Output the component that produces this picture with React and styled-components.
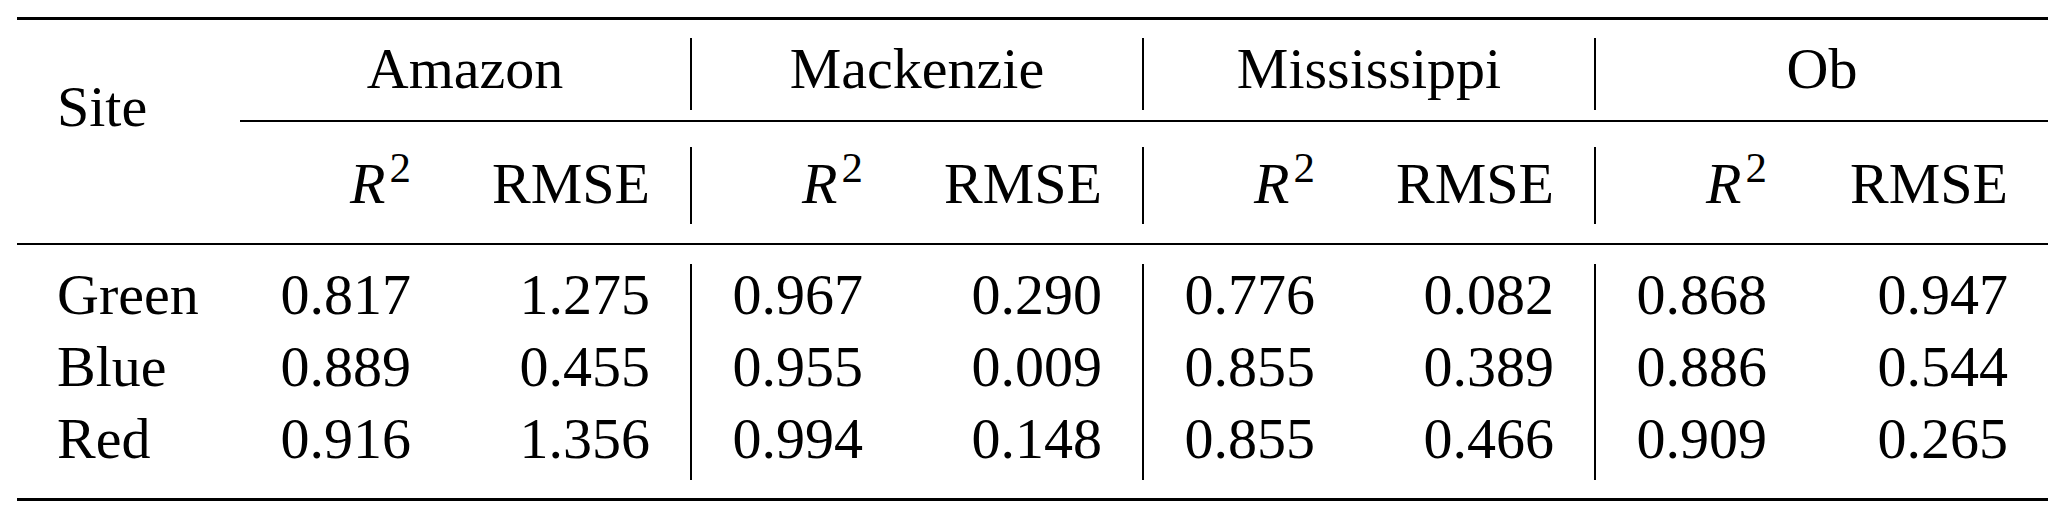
import React from 'react';
import styled, { createGlobalStyle } from 'styled-components';

const Global = createGlobalStyle`
  html, body { margin: 0; padding: 0; background: #fff; }
  body { font-family: "Liberation Serif", "Times New Roman", serif; color: #000; }
`;

const Page = styled.div`
  padding: 17px 0 0 17px;
`;

const Table = styled.div`
  display: grid;
  grid-template-columns: 223px repeat(4, 211px 241px);
  width: max-content;
  font-family: "Liberation Serif", "Times New Roman", serif;
  font-size: 58px;
  color: #000;
`;

const Rule = styled.div`
  grid-column: ${p => p.$from || 1} / -1;
  height: ${p => p.$w}px;
  background: #000;
  margin-top: ${p => p.$mt || 0}px;
  margin-bottom: ${p => p.$mb || 0}px;
`;

const SiteCell = styled.div`
  grid-column: 1;
  grid-row: 2 / span 3;
  padding: 38px 0 0 40px;
  line-height: 61px;
  white-space: nowrap;
`;

const GroupHead = styled.div`
  grid-column: span 2;
  box-sizing: border-box;
  height: 72px;
  line-height: 61px;
  padding-bottom: 11px;
  text-align: center;
  white-space: nowrap;
  border-right: ${p => (p.$sep ? '2px solid #000' : 'none')};
`;

const SubHead = styled.div`
  box-sizing: border-box;
  height: 77px;
  line-height: 61px;
  padding: 6px 40px 10px 0;
  text-align: right;
  white-space: nowrap;
  border-right: ${p => (p.$sep ? '2px solid #000' : 'none')};
`;

const Cell = styled.div`
  box-sizing: border-box;
  height: 72px;
  line-height: 61px;
  padding: 0 ${p => (p.$first ? 0 : 40)}px 11px ${p => (p.$first ? 40 : 0)}px;
  text-align: ${p => (p.$first ? 'left' : 'right')};
  white-space: nowrap;
  border-right: ${p => (p.$sep ? '2px solid #000' : 'none')};
`;

const MathR = styled.span`
  font-style: italic;
`;

const Sup = styled.sup`
  font-size: 0.74em;
  line-height: 0;
  vertical-align: 21px;
  margin-left: 4px;
`;

const groups = ['Amazon', 'Mackenzie', 'Mississippi', 'Ob'];

const rows = [
  ['Green', ['0.817', '1.275'], ['0.967', '0.290'], ['0.776', '0.082'], ['0.868', '0.947']],
  ['Blue', ['0.889', '0.455'], ['0.955', '0.009'], ['0.855', '0.389'], ['0.886', '0.544']],
  ['Red', ['0.916', '1.356'], ['0.994', '0.148'], ['0.855', '0.466'], ['0.909', '0.265']],
];

export default function App() {
  return (
    <Page>
      <Global />
      <Table>
        <Rule $w={3} $mb={18} />
        <SiteCell>Site</SiteCell>
        {groups.map((g, i) => (
          <GroupHead key={g} $sep={i < 3}>{g}</GroupHead>
        ))}
        <Rule $from={2} $w={2} $mt={10} $mb={25} />
        {groups.map((g, i) => (
          <React.Fragment key={g}>
            <SubHead>
              <MathR>R</MathR>
              <Sup>2</Sup>
            </SubHead>
            <SubHead $sep={i < 3}>RMSE</SubHead>
          </React.Fragment>
        ))}
        <Rule $w={2} $mt={19} $mb={19} />
        {rows.map(([name, ...vals]) => (
          <React.Fragment key={name}>
            <Cell $first>{name}</Cell>
            {vals.map(([r2, rmse], i) => (
              <React.Fragment key={i}>
                <Cell>{r2}</Cell>
                <Cell $sep={i < 3}>{rmse}</Cell>
              </React.Fragment>
            ))}
          </React.Fragment>
        ))}
        <Rule $w={3} $mt={18} />
      </Table>
    </Page>
  );
}
